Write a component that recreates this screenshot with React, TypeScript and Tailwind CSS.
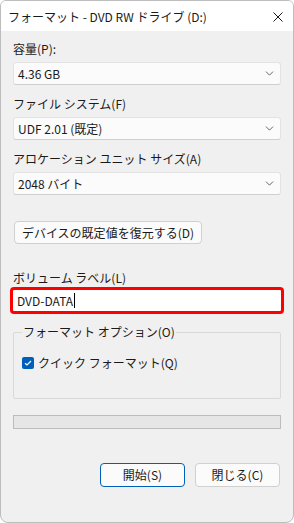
import { ChevronDown } from "lucide-react";

const font = { fontFamily: '"Noto Sans CJK JP", "Noto Sans", sans-serif' };

function Field({ label, value }: { label: string; value: string }) {
  return (
    <div className="flex flex-col">
      <div className="h-4 leading-4">{label}</div>
      <div className="mt-[5px] h-[23px] flex items-center justify-between rounded-[3px] border border-[#e3e3e3] border-b-[#cfcfcf] bg-[#fbfbfb] pl-[4px] pr-[4px]">
        <span>{value}</span>
        <ChevronDown className="w-[13px] h-[13px] text-[#444444]" strokeWidth={1.5} />
      </div>
    </div>
  );
}

export default function App() {
  return (
    <div
      className="w-[294px] h-[523px] flex flex-col overflow-hidden rounded-b-lg rounded-t-md border border-[#bdbdbd] bg-[#f0f0f0] text-[12px] text-[#1a1a1a]"
      style={font}
    >
      <div className="h-[30px] shrink-0 flex items-center justify-between bg-white pl-[7px] pr-[10px]">
        <span className="mt-[2px]">フォーマット - DVD RW ドライブ (D:)</span>
        <svg width="10" height="10" viewBox="0 0 10 10" className="mt-[2px]">
          <path d="M0.5 0.5 L9.5 9.5 M9.5 0.5 L0.5 9.5" stroke="#1a1a1a" strokeWidth="1" />
        </svg>
      </div>

      <div className="flex flex-col px-[12px] pt-[10px]">
        <Field label="容量(P):" value="4.36 GB" />
        <div className="mt-[11px]">
          <Field label="ファイル システム(F)" value="UDF 2.01 (既定)" />
        </div>
        <div className="mt-[11px]">
          <Field label="アロケーション ユニット サイズ(A)" value="2048 バイト" />
        </div>

        <button className="mt-[26px] ml-[1px] w-[188px] h-[23px] rounded-[4px] border border-[#d0d0d0] bg-[#fbfbfb] text-center">
          デバイスの既定値を復元する(D)
        </button>

        <div className="mt-[26px] h-4 leading-4">ボリューム ラベル(L)</div>
        <div className="mt-[1px] -mx-[3px] h-[27px] flex items-center rounded-[4px] border-[3px] border-[#ff0000] bg-white pl-[4px]">
          <span>DVD-DATA</span>
          <span className="ml-[1px] w-px h-[15px] bg-black" />
        </div>

        <div className="relative mt-[18px] h-[67px] rounded-[2px] border border-[#d9d9d9]">
          <span className="absolute -top-[9px] left-[8px] bg-[#f0f0f0] px-[1px] leading-4">
            フォーマット オプション(O)
          </span>
          <div className="mt-[21px] ml-[8px] flex items-center gap-[4px]">
            <span className="w-[12px] h-[12px] flex items-center justify-center rounded-[2px] bg-[#005fb8]">
              <svg width="8" height="8" viewBox="0 0 8 8">
                <path d="M1 4.2 L3 6 L7 2" fill="none" stroke="white" strokeWidth="1.2" />
              </svg>
            </span>
            <span>クイック フォーマット(Q)</span>
          </div>
        </div>

        <div className="mt-[16px] h-[14px] border border-[#bcbcbc] bg-[#e6e6e6]" />

        <div className="mt-[34px] flex justify-end gap-[10px] pr-[1px]">
          <button className="w-[85px] h-[24px] rounded-[4px] border border-[#005fb8] bg-[#fbfbfb]">開始(S)</button>
          <button className="w-[85px] h-[24px] rounded-[4px] border border-[#d0d0d0] bg-[#fbfbfb]">閉じる(C)</button>
        </div>
      </div>
    </div>
  );
}
